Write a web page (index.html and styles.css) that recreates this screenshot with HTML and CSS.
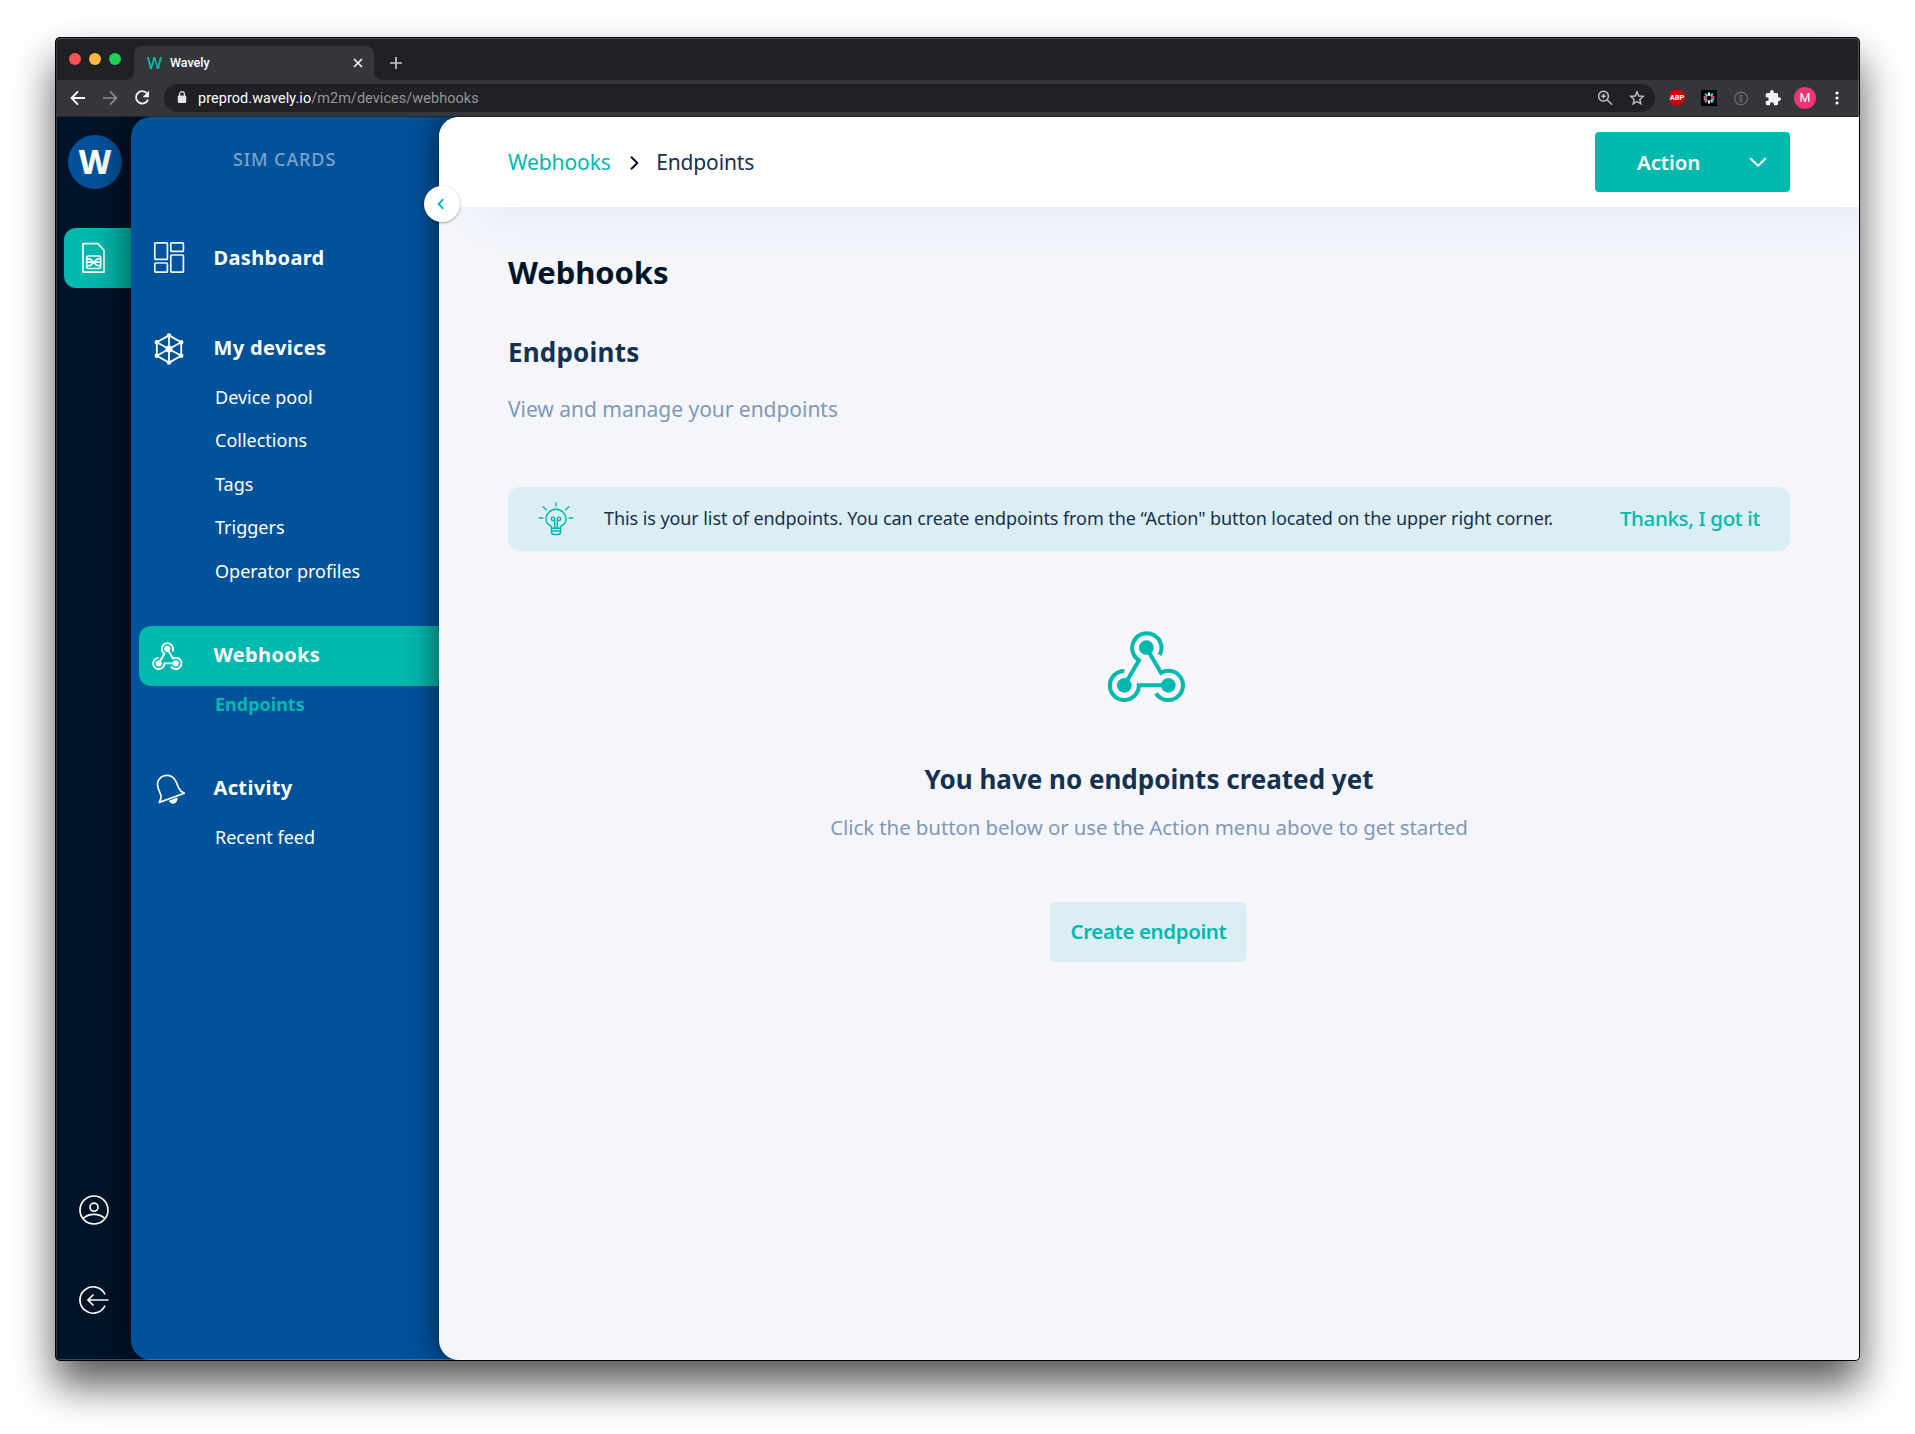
FILE: index.html
```html
<!DOCTYPE html>
<html lang="en">
<head>
<meta charset="utf-8">
<title>Wavely</title>
<link rel="stylesheet" href="styles.css">
</head>
<body>
<div class="window">
  <header class="tabstrip">
    <div class="lights"><i class="light red"></i><i class="light amber"></i><i class="light green"></i></div>
    <div class="tab">
      <span class="favicon">W</span>
      <span class="tab-title">Wavely</span>
      <svg class="tab-close" width="10" height="10" viewBox="0 0 10 10"><path d="M1 1l8 8M9 1L1 9" stroke="#fff" stroke-width="1.5" fill="none"/></svg>
    </div>
    <svg class="new-tab" width="12" height="12" viewBox="0 0 12 12"><path d="M6 0v12M0 6h12" stroke="#c4c5c7" stroke-width="1.7"/></svg>
  </header>

  <div class="toolbar">
    <div class="nav-buttons">
      <svg width="16" height="16" viewBox="0 0 16 16" fill="none" stroke="#fff" stroke-width="1.9"><path d="M15 8H2M8 1.4L1.6 8 8 14.6"/></svg>
      <svg width="16" height="16" viewBox="0 0 16 16" fill="none" stroke="#8b8c8e" stroke-width="1.7"><path d="M1 8h13M8 1.4L14.4 8 8 14.6"/></svg>
      <svg width="16" height="16" viewBox="0 0 16 16"><path d="M13 3.4A6.2 6.2 0 1 0 14 9.6" fill="none" stroke="#f1f1f2" stroke-width="1.9"/><path d="M15 .8v6.4H8.6z" fill="#f1f1f2"/></svg>
    </div>
    <div class="address">
      <svg width="10" height="13" viewBox="0 0 10 13"><rect x=".8" y="4.6" width="8.4" height="7.4" rx="1" fill="#e4e5e7"/><path d="M2.6 5V3.1a2.4 2.4 0 0 1 4.8 0V5" fill="none" stroke="#e4e5e7" stroke-width="1.3"/></svg>
      <span class="url"><b>preprod.wavely.io</b>/m2m/devices/webhooks</span>
      <svg class="address-icon" width="16" height="16" viewBox="0 0 16 16" fill="none" stroke="#c1c3c6" stroke-width="1.5"><circle cx="6.5" cy="6.2" r="4.9"/><path d="M10.1 9.8l5 5M4.2 6.2h4.6M6.5 3.9v4.6" /></svg>
      <svg class="address-icon" width="16" height="16" viewBox="0 0 16 16"><path d="M8 1.9l1.75 4.1 4.5.4-3.4 3 1 4.4L8 11.5l-3.85 2.3 1-4.4-3.4-3 4.5-.4z" fill="none" stroke="#c1c3c6" stroke-width="1.4"/></svg>
    </div>
    <div class="extensions">
      <span class="abp">ABP</span>
      <svg width="16" height="16" viewBox="0 0 16 16"><path fill="#000" d="M0 0h16v16H0z"/><g stroke-width="2.100"><path d="M8 2.500v3.200M8 10.300v3.200" stroke="#fff"/><path d="M2.600 7h3.200M10.200 7h3.200" stroke="#ff3d78"/><path d="M2.900 9.400h2.900M10.200 9.400h2.900" stroke="#29d5e8"/><path d="M4.200 3.800l2.200 2.300M11.800 3.800L9.600 6.100" stroke="#2edce0"/><path d="M4.300 12.400l2-2.300" stroke="#ff3d78"/><path d="M11.700 12.400l-2-2.300" stroke="#5ae3ee"/></g></svg>
      <svg width="16" height="16" viewBox="0 0 16 16" fill="none"><circle cx="8" cy="8.500" r="6.300" stroke="#6c6d70" stroke-width="1.200"/><path d="M8 4.800v7.400" stroke="#6c6d70" stroke-width="2.600"/><path d="M8 6v5" stroke="#36373a" stroke-width=".8"/></svg>
      <svg width="16" height="16" viewBox="1 1 22 22"><path fill="#f1f1f3" d="M20.500 11H19V7c0-1.100-.9-2-2-2h-4V3.500a2.500 2.500 0 0 0-5 0V5H4c-1.100 0-2 .9-2 2v3.800h1.500a2.700 2.700 0 0 1 0 5.400H2V20c0 1.100.9 2 2 2h3.800v-1.500a2.700 2.700 0 0 1 5.400 0V22H17c1.100 0 2-.9 2-2v-4h1.500a2.500 2.500 0 0 0 0-5z"/></svg>
      <span class="avatar">M</span>
      <svg class="menu-dots" width="4" height="14" viewBox="0 0 4 14" fill="#fff"><circle cx="2" cy="2" r="1.600"/><circle cx="2" cy="7" r="1.600"/><circle cx="2" cy="12" r="1.600"/></svg>
    </div>
  </div>

  <div class="app">
    <aside class="rail">
      <div class="logo">W</div>
      <a class="rail-active">
        <svg width="24" height="32" viewBox="0 0 24 32" fill="none" stroke="#f4fbfa" stroke-width="1.700" stroke-linejoin="round"><path d="M1 1.600h15l6 6.600v22H1z"/><rect x="4.700" y="14" width="14" height="12.500" rx="1.500"/><path d="M4.700 16.800h3.500M4.700 23.700h3.500M15.200 16.800h3.500M15.200 23.700h3.500M4.700 20.200h14M8 16.800l7.400 7M15.400 16.800l-7.400 7"/></svg>
      </a>
      <svg class="rail-user" width="32" height="32" viewBox="0 0 32 32" fill="none" stroke="#fff" stroke-width="1.700"><circle cx="16" cy="16" r="14"/><circle cx="16" cy="13.200" r="4"/><path d="M5 24.500c6-5.600 16-5.600 22 0"/></svg>
      <svg class="rail-logout" width="32" height="32" viewBox="0 0 32 32" fill="none" stroke="#fff" stroke-width="1.700" stroke-linecap="round"><path d="M26.800 9.800a13.200 13.200 0 1 0 0 12.400M30 16H10.500M15 11l-5 5 5 5"/></svg>
    </aside>

    <nav class="panel">
      <div class="panel-title">SIM CARDS</div>
      <a class="entry">
        <svg class="icon-dashboard" width="32" height="34" viewBox="0 0 32 34" fill="none" stroke="#f0f5fa" stroke-width="1.700"><rect x="1.800" y="1.800" width="12.600" height="16.600" rx="1"/><rect x="17.800" y="1.800" width="12.600" height="8.600" rx="1"/><rect x="1.800" y="22" width="12.600" height="9.200" rx="1"/><rect x="17.800" y="14" width="12.600" height="17.200" rx="1"/></svg>
        <span>Dashboard</span>
      </a>
      <a class="entry spaced">
        <svg width="32" height="34" viewBox="0 0 32 34" fill="none" stroke="#fff" stroke-width="1.800"><path d="M16 3.400l12.200 6.800v13.600L16 30.600 3.800 23.800V10.200zM16 3.400v27.200M3.800 10.200l24.400 13.600M28.200 10.200L3.800 23.800"/><g fill="#fff" stroke="none"><circle cx="16" cy="17" r="3.500"/><circle cx="16" cy="3.400" r="2.200"/><circle cx="16" cy="30.600" r="2.200"/><circle cx="3.800" cy="10.200" r="2.200"/><circle cx="28.200" cy="10.200" r="2.200"/><circle cx="3.800" cy="23.800" r="2.200"/><circle cx="28.200" cy="23.800" r="2.200"/></g></svg>
        <span>My devices</span>
      </a>
      <ul class="sub">
        <li>Device pool</li>
        <li>Collections</li>
        <li>Tags</li>
        <li>Triggers</li>
        <li>Operator profiles</li>
      </ul>
      <a class="entry active">
        <svg width="32" height="28.400" viewBox="620 480 248 220" fill="none" stroke="#fff" stroke-width="14"><path d="M778 555A44 44 0 1 0 716 571L672 646M672 603A43.500 43.500 0 1 0 715.500 646H804M767 670A44 44 0 1 0 782 608L738 533"/><g fill="#fff" stroke="none"><circle cx="738" cy="533" r="24"/><circle cx="672" cy="646" r="24"/><circle cx="804" cy="646" r="24"/></g></svg>
        <span>Webhooks</span>
      </a>
      <ul class="sub current"><li>Endpoints</li></ul>
      <a class="entry">
        <svg width="32" height="32" viewBox="0 0 32 32" fill="none" stroke="#fff" stroke-width="1.700" stroke-linejoin="round"><path d="M6.300 29.400l1.700-4.600c.6-2.300-1.200-5-2.700-9.300C3 8.700 6.500 4 11 2.800c5.500-1.500 10.300 1 12.500 6.700 1.800 4.800 2.200 7 4.300 8.500l3.500 2.200z"/><path fill="#fff" stroke="none" d="M15.800 27.800l8.600-3.300c.6 2.800-.8 5.300-3.300 6-2.200.6-4.300-.5-5.300-2.700z"/></svg>
        <span>Activity</span>
      </a>
      <ul class="sub"><li>Recent feed</li></ul>
    </nav>

    <main class="main">
      <header class="topbar">
        <div class="crumbs">
          <a>Webhooks</a>
          <svg width="9" height="14" viewBox="0 0 9 14" fill="none" stroke="#001429" stroke-width="2" stroke-linecap="round" stroke-linejoin="round"><path d="M1.500 1.200L7.300 7l-5.800 5.800"/></svg>
          <span>Endpoints</span>
        </div>
        <button class="action">
          <span>Action</span>
          <svg width="18" height="11" viewBox="0 0 18 11" fill="none" stroke="#fff" stroke-width="2" stroke-linecap="round" stroke-linejoin="round"><path d="M1.800 1.700L9 8.900l7.200-7.200"/></svg>
        </button>
      </header>
      <section class="content">
        <h1>Webhooks</h1>
        <h2>Endpoints</h2>
        <p class="lead">View and manage your endpoints</p>
        <div class="tip">
          <svg width="36" height="34" viewBox="0 0 36 34" fill="none" stroke="#00b9ae" stroke-width="1.400" stroke-linecap="round"><path d="M18 1v3M5.300 4.800l3 3M30.700 4.800l-3 3M1.300 16h3.600M31.100 16h3.600M13.500 26.300v-1.800C10 22.900 8 20.500 8 17.300a10 10 0 0 1 20 0c0 3.200-2 5.600-5.500 7.200v1.800z"/><path d="M16.700 26v-7.500h-1.500a1.700 1.700 0 1 1 1.500-1.500v9M19.300 26v-7.500h1.500a1.700 1.700 0 1 0-1.500-1.500v9M13.500 29h9M13.500 26.500v3.500a2.500 2.500 0 0 0 2.500 2.500h4a2.500 2.500 0 0 0 2.500-2.500v-3.500"/></svg>
          <p>This is your list of endpoints. You can create endpoints from the “Action" button located on the upper right corner.</p>
          <a>Thanks, I got it</a>
        </div>
        <div class="empty">
          <svg width="80" height="73.333" viewBox="620 480 240 220" fill="none" stroke="#00b9ae" stroke-width="12"><path d="M778 555A44 44 0 1 0 716 571L672 646M672 603A43.500 43.500 0 1 0 715.500 646H804M767 670A44 44 0 1 0 782 608L738 533"/><g fill="#00b9ae" stroke="none"><circle cx="738" cy="533" r="22"/><circle cx="672" cy="646" r="22"/><circle cx="804" cy="646" r="22"/></g></svg>
          <h3>You have no endpoints created yet</h3>
          <p>Click the button below or use the Action menu above to get started</p>
          <button class="create">Create endpoint</button>
        </div>
      </section>
      <button class="collapse" aria-label="Collapse menu"><svg width="8" height="12" viewBox="0 0 8 12" fill="none" stroke="#00b9ae" stroke-width="1.900"><path d="M6.300 1.200L1.700 6l4.600 4.800"/></svg></button>
    </main>
  </div>
</div>
</body>
</html>
```
FILE: styles.css
```css
* { box-sizing: border-box; }

body {
  margin: 0;
  height: 1434px;
  padding: 37px 55px 73px;
  overflow: hidden;
  background: #fff;
  font-family: "Noto Sans", sans-serif;
}

h1, h2, h3, p, ul { margin: 0; padding: 0; }
ul { list-style: none; }
button { border: 0; padding: 0; font-family: inherit; }
svg { display: block; flex: none; }

.window {
  position: relative;
  display: flex;
  flex-direction: column;
  width: 1805px;
  height: 1324px;
  padding: 1px 1px 1px 2px;
  border-radius: 5px;
  background: #000;
  box-shadow: 0 24px 42px rgba(0, 0, 0, .66);
}

/* thin light edge round the window */
.window::after {
  content: "";
  position: absolute;
  inset: 1px;
  border: 1px solid rgba(255, 255, 255, .22);
  border-radius: 4px;
  z-index: 5;
  pointer-events: none;
}

/* browser chrome */
.tabstrip {
  display: flex;
  align-items: center;
  height: 42px;
  padding-left: 12px;
  background: #202124;
  border-radius: 4px 4px 0 0;
}
.lights { display: flex; gap: 8px; width: 65px; }
.light { width: 12px; height: 12px; border-radius: 50%; }
.red { background: #ff4f51; }
.amber { background: #ffbb3f; }
.green { background: #20cf55; }
.tab {
  position: relative;
  display: flex;
  align-items: center;
  align-self: flex-end;
  width: 240px;
  height: 34px;
  padding: 0 11px 0 13px;
  border-radius: 8px 8px 0 0;
  background: #35363a;
}
.tab::before, .tab::after {
  content: "";
  position: absolute;
  bottom: 0;
  width: 8px;
  height: 8px;
}
.tab::before { left: -8px; background: radial-gradient(circle at 0 0, transparent 7.5px, #35363a 8px); }
.tab::after { right: -8px; background: radial-gradient(circle at 100% 0, transparent 7.5px, #35363a 8px); }
.favicon { width: 23px; color: #0fbcb1; font: 500 16px/34px "Noto Sans", sans-serif; }
.tab-title { flex: 1; color: #fff; font: 500 12.500px/34px Roboto, sans-serif; }
.new-tab { margin: 8px 0 0 16px; }

.toolbar {
  display: flex;
  align-items: center;
  height: 37px;
  padding: 0 20px 1px 13px;
  background: #35363a;
  border-bottom: 1px solid #242528;
}
.nav-buttons { display: flex; gap: 16px; width: 94px; }
.address {
  display: flex;
  align-items: center;
  width: 1491px;
  height: 28px;
  padding: 0 10px 0 13px;
  border-radius: 14px;
  background: #202124;
}
.url { flex: 1; margin-left: 11px; padding-top: 1px; color: #96989b; font: 400 14.400px/27px Roboto, sans-serif; letter-spacing: .1px; }
.url b { color: #fff; font-weight: 400; }
.address-icon + .address-icon { margin-left: 16px; }
.extensions { display: flex; align-items: center; gap: 16px; margin-left: 14px; }
.abp {
  width: 16px;
  height: 16px;
  color: #fff;
  background: #d10007;
  clip-path: polygon(30% 0, 70% 0, 100% 30%, 100% 70%, 70% 100%, 30% 100%, 0 70%, 0 30%);
  font: 700 7.500px/16px Roboto, sans-serif;
  text-align: center;
}
.avatar {
  width: 22px;
  height: 22px;
  margin: 0 -3px;
  border-radius: 50%;
  background: #ef3377;
  color: #fff;
  font: 400 12.500px/22px Roboto, sans-serif;
  text-align: center;
}
.menu-dots { margin-left: 6px; }

/* app frame */
.app {
  display: flex;
  flex: 1;
  min-height: 0;
  overflow: hidden;
  background: #001429;
  border-radius: 0 0 4px 4px;
}
.rail {
  display: flex;
  flex-direction: column;
  width: 74px;
  padding-top: 18px;
}
.logo {
  width: 54px;
  height: 54px;
  margin-left: 11px;
  border-radius: 50%;
  background: #00529b;
  color: #fff;
  font: 800 33px/54px "Noto Sans", sans-serif;
  text-align: center;
}
.rail-active {
  display: flex;
  align-items: center;
  height: 60px;
  margin: 39px 0 0 7px;
  padding-left: 18px;
  border-radius: 12px 0 0 12px;
  background: #00b9ae;
}
.rail-user { margin: auto 0 0 20.500px; }
.rail-logout { margin: 58px 0 44px 20.500px; }

.panel {
  position: relative;
  width: 328px;
  margin-right: -20px;
  padding: 22px 20px 0 8px;
  border-radius: 20px 0 0 20px;
  background: #00529b;
  box-shadow: 0 0 36px 6px rgba(0, 0, 0, .48);
}
.panel-title {
  height: 40px;
  margin-bottom: 50px;
  padding-left: 94px;
  color: #7ba3cb;
  font-size: 18px;
  font-weight: 500;
  line-height: 40px;
  letter-spacing: .9px;
}
.entry {
  display: flex;
  align-items: center;
  height: 60px;
  padding-left: 14px;
  border-radius: 12px 0 0 12px;
  color: #fff;
  font-size: 20px;
  font-weight: 700;
  letter-spacing: .35px;
}
.icon-dashboard { margin-bottom: 2px; }
.entry span { margin-left: 28.500px; padding-bottom: 2.500px; }
.entry.spaced { margin-top: 30px; }
.active { padding-left: 13px; background: #00b9ae; }
.active span { margin-left: 29.500px; }
.sub {
  margin: -3.500px 0 33px;
  padding-left: 76px;
  color: #fff;
  font-size: 18px;
  line-height: 43.500px;
}
.current { color: #00b9ae; font-weight: 700; }

.main {
  position: relative;
  z-index: 1;
  flex: 1;
  border-radius: 20px 0 0 20px;
  background: #f4f6fc;
  box-shadow: 0 0 30px 4px rgba(0, 0, 0, .5);
}
.topbar {
  display: flex;
  align-items: center;
  justify-content: space-between;
  height: 90px;
  padding: 0 69px;
  border-radius: 20px 0 0 0;
  background: #fff;
  box-shadow: 30px 24px 44px -16px rgba(60, 110, 170, .1);
}
.crumbs { display: flex; align-items: center; color: #17304f; font-size: 21px; }
.crumbs a { color: #00b9ae; letter-spacing: -.1px; }
.crumbs svg { margin: 1px 17.500px 0 19px; }
.crumbs span { letter-spacing: -.15px; }
.action {
  display: flex;
  align-items: center;
  justify-content: space-between;
  width: 195px;
  height: 60px;
  padding: 0 23px 0 42px;
  border-radius: 4px;
  background: #00b9ae;
  color: #fff;
  font-size: 20.500px;
  font-weight: 600;
  letter-spacing: -.1px;
}
.action span { padding-bottom: 1px; }

.content { padding: 42px 69px 0; }
h1 { color: #001429; font-size: 31px; line-height: 46px; letter-spacing: -.1px; }
h2 { margin-top: 37px; color: #16304f; font-size: 26px; line-height: 40px; letter-spacing: .2px; }
.lead { margin-top: 20px; color: #8099b5; font-size: 21px; line-height: 34px; letter-spacing: -.03px; }
.tip {
  display: flex;
  align-items: center;
  height: 64px;
  margin-top: 61px;
  padding: 0 30px;
  border-radius: 12px;
  background: #daeef3;
}
.tip p { margin-left: 30px; padding-bottom: 2px; color: #16304f; font-size: 18px; letter-spacing: -.08px; white-space: nowrap; }
.tip a { margin-left: auto; padding-bottom: 1.500px; color: #00b9ae; font-size: 20.500px; font-weight: 500; letter-spacing: -.35px; white-space: nowrap; }
.empty { display: flex; flex-direction: column; align-items: center; padding-top: 79px; }
.empty > svg { margin-left: -5px; }
.empty h3 { margin-top: 55.667px; color: #16304f; font-size: 26px; line-height: 40px; }
.empty p { margin-top: 11px; color: #8099b5; font-size: 20.500px; line-height: 34px; letter-spacing: -.1px; }
.create {
  width: 197px;
  height: 60px;
  margin: 58px 1px 0 0;
  padding-bottom: 1px;
  border-radius: 4px;
  background: #daeef3;
  color: #00b9ae;
  font-size: 20.500px;
  font-weight: 600;
  letter-spacing: -.4px;
}
.collapse {
  position: absolute;
  left: -15px;
  top: 69px;
  display: flex;
  align-items: center;
  justify-content: center;
  width: 36px;
  height: 36px;
  padding-right: 3px;
  border-radius: 50%;
  background: #fff;
  box-shadow: 0 1px 3px rgba(0, 0, 0, .35);
}
```
